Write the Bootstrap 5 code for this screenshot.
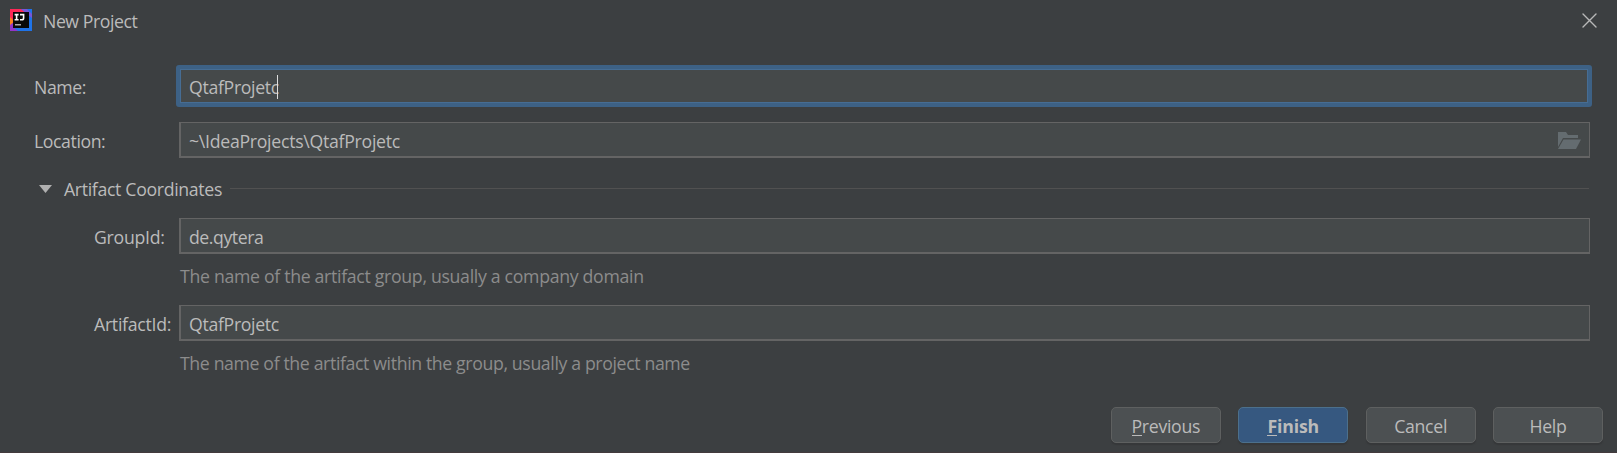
<!DOCTYPE html>
<html lang="en" data-bs-theme="dark">
<head>
<meta charset="utf-8">
<title>New Project</title>
<link href="https://cdn.jsdelivr.net/npm/bootstrap@5.3.0/dist/css/bootstrap.min.css" rel="stylesheet">
<style>
  body { background: #3c3f41; color: #bbb; font: 17.7px/24px "Open Sans", sans-serif; letter-spacing: -.33px; overflow: hidden; }
  .dialog { height: 453px; border-bottom: 1px solid #433b3d; }
  .titlebar { height: 65px; padding: 9px 19px 0 10px; }
  .title-text { padding: 0 0 0 11px; letter-spacing: -.44px; }
  .close-icon { margin-top: 4px; margin-right: 1px; }
  .fields { padding: 0 27px 0 34px; }
  .line { height: 36px; }
  .line-label { width: 145px; padding-top: 2px; letter-spacing: -.42px; }
  .line-sub .line-label { padding-left: 60px; letter-spacing: -.28px; }
  .form-control.field { height: 36px; padding: 1px 9px 0 8px; border: 1px solid #646464; border-bottom-width: 2px; border-left-width: 2px; border-radius: 0; background: #45494a; color: #bbb; font: inherit; letter-spacing: -.32px; line-height: 34px; }
  .form-control.field-focus { height: 42px; width: 1416px; margin: 0 -3px; padding: 3px 8px 0 9px; border: 4px solid #3d6185; border-width: 4px 4px 5px 4px; border-radius: 3px; line-height: 31px; outline: 1px solid #466d94; outline-offset: -5px; }
  .caret { width: 1px; height: 24px; background: #ddd; margin-left: -2px; }
  .path-text { padding-top: 2px; letter-spacing: -.28px; }
  .section-head { height: 24px; margin-top: 19px; }
  .arrow { margin: 0 12px 1px 5px; }
  .hint { margin-top: 10px; padding-left: 146px; color: #8c8c8c; white-space: nowrap; letter-spacing: -.31px; }
  .hint-wide { letter-spacing: -.37px; }
  .rule { height: 1px; background: #515151; margin: 0 1px 1px 8px; }
  .actions { gap: 17.4px; padding: 32px 14px 0 0; }
  .btn.action { width: 110px; height: 36px; padding: 1px 0 0; border: 1px solid #5e6060; border-radius: 5px; background: #4c5052; color: #bbb; font: inherit; letter-spacing: -.3px; line-height: 35px; box-shadow: 0 2px 1px #36383a; }
  .btn.action-main { background: #365880; border-color: #4c708c; font-weight: 700; letter-spacing: -.15px; }
  .mnemonic { border-bottom: 1px solid currentColor; display: inline-block; line-height: 18px; }
</style>
</head>
<body>
<main class="dialog d-flex flex-column">
  <header class="titlebar d-flex align-items-start">
    <svg width="22" height="22" viewBox="0 0 22 22">
      <path fill="#1f73e8" d="M0 0h22v22H0z"/>
      <path fill="#fe2857" d="M0 0h11l4 3-10 16H0z"/>
      <path fill="#7856d8" d="M11 0h6l5 5v4l-5-4z"/>
      <path fill="#fc801d" d="M0 8l3 3v8l-3-3z"/>
      <path fill="#9135c9" d="M0 16l4-3v6l4 3H0z"/>
      <path fill="#090909" d="M3 3h16v16H3z"/>
      <path fill="none" stroke="#fff" stroke-width="1.6" d="M4.6 5.6h4M6.6 5.6v5.2M4.6 10.8h4M10 5.6h3.6v3.4q0 1.8-1.7 1.8H10"/>
      <path fill="#aaa" d="M5 15h6v1.5H5z"/>
    </svg>
    <span class="title-text">New Project</span>
    <svg class="close-icon ms-auto" width="15" height="15" viewBox="0 0 15 15" stroke="#b8b8b8" stroke-width="1.4" stroke-linecap="round"><path d="M1 1l13 13M14 1L1 14"/></svg>
  </header>

  <section class="fields">
    <div class="d-flex align-items-center">
      <div class="line-label flex-shrink-0">Name:</div>
      <div class="form-control field field-focus d-flex align-items-center flex-shrink-0"><span>QtafProjetc</span><span class="caret"></span></div>
    </div>
    <div class="line d-flex align-items-center" style="margin-top:15px">
      <div class="line-label flex-shrink-0">Location:</div>
      <div class="form-control field d-flex align-items-center justify-content-between pe-2">
        <span class="path-text">~\IdeaProjects\QtafProjetc</span>
        <svg width="23" height="17" viewBox="0 0 23 17" fill="#646c70"><path d="M0 0h8l2 3h10v3H5L0 15z"/><path d="M5.5 7.5H23L18 17H0z"/></svg>
      </div>
    </div>
    <div class="section-head d-flex align-items-center">
      <svg class="arrow" width="13" height="8" viewBox="0 0 13 8"><path fill="#b0b0b0" d="M0 0h13L6.5 8z"/></svg>
      <span>Artifact Coordinates</span>
      <div class="rule flex-grow-1"></div>
    </div>
    <div class="line line-sub d-flex align-items-center" style="margin-top:17px">
      <div class="line-label flex-shrink-0">GroupId:</div>
      <div class="form-control field" style="letter-spacing:-.45px">de.qytera</div>
    </div>
    <div class="hint">The name of the artifact group, usually a company domain</div>
    <div class="line line-sub d-flex align-items-center" style="margin-top:17px">
      <div class="line-label flex-shrink-0">ArtifactId:</div>
      <div class="form-control field">QtafProjetc</div>
    </div>
    <div class="hint hint-wide">The name of the artifact within the group, usually a project name</div>
  </section>

  <footer class="actions d-flex justify-content-end">
    <button class="btn action"><span class="mnemonic">P</span>revious</button>
    <button class="btn action action-main"><span class="mnemonic">F</span>inish</button>
    <button class="btn action">Cancel</button>
    <button class="btn action">Help</button>
  </footer>
</main>
<script src="https://cdn.jsdelivr.net/npm/bootstrap@5.3.0/dist/js/bootstrap.bundle.min.js"></script>
</body>
</html>
